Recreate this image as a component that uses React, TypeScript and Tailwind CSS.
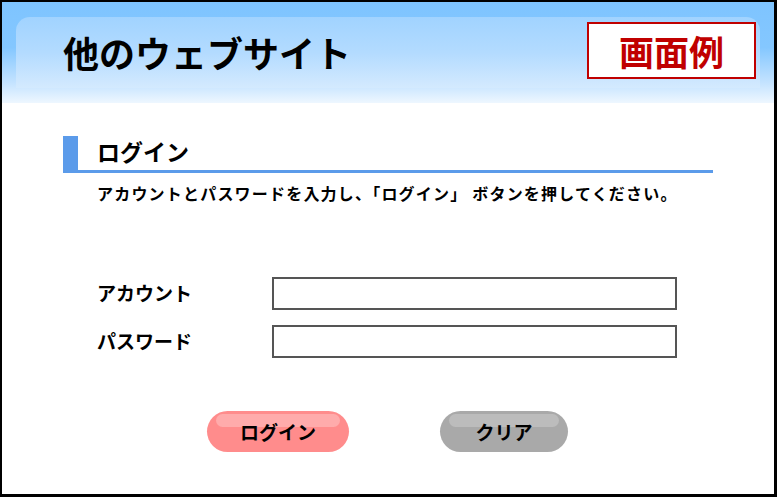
import React from 'react';

const font = { fontFamily: '"Noto Sans CJK JP", "Noto Sans", sans-serif' };

const PillButton: React.FC<{ label: string; base: string; shine: string; width: string }> = ({ label, base, shine, width }) => (
  <button className={`relative h-[41px] ${width} ${base} rounded-full flex items-center justify-center`}>
    <span className={`absolute left-[9px] right-[9px] top-[3px] h-[13px] rounded-full ${shine}`} />
    <span className="relative text-[19px] font-bold text-black leading-none">{label}</span>
  </button>
);

const App: React.FC = () => {
  return (
    <div style={font} className="w-[777px] h-[497px] bg-white border-black border-l-2 border-t-2 border-r-[3px] border-b-[3px] flex flex-col overflow-hidden">
      {/* header */}
      <div className="h-[101px] shrink-0 pt-[15px] pl-[14px] pr-[14px] bg-[linear-gradient(to_bottom,#7ec4ff_0%,#84c7ff_45%,#c4e3ff_80%,#eef7ff_100%)]">
        <div className="h-[71px] rounded-t-[14px] bg-[linear-gradient(to_bottom,#a1d3ff_0%,#b3dbff_50%,#d4eafe_100%)] flex items-start justify-between">
          <h1 className="pl-[47px] mt-[17px] text-[36px] font-bold text-black leading-none">他のウェブサイト</h1>
          <div className="mt-[5px] mr-[4px] w-[169px] h-[57px] bg-white border-2 border-[#c00000] flex items-center justify-center">
            <span className="text-[35px] font-bold text-[#c00000] leading-none">画面例</span>
          </div>
        </div>
      </div>

      {/* body */}
      <div className="pl-[61px] pt-[33px]">
        <div className="w-[650px] h-[37px] flex items-center border-b-[3px] border-[#5b9bea]">
          <div className="w-[15px] self-stretch bg-[#5b9bea]" />
          <h2 className="pl-[19px] pb-[4px] text-[23px] font-bold text-black leading-none">ログイン</h2>
        </div>
        <p className="mt-[8px] pl-[34px] text-[16px] font-bold text-black leading-[24px] tracking-[1.2px]">
          アカウントとパスワードを入力し、「ログイン」 ボタンを押してください。
        </p>

        <div className="mt-[72px] pl-[34px] flex flex-col gap-[15px]">
          <div className="flex items-center">
            <label className="w-[175px] pb-[3px] text-[19px] font-bold text-black leading-none">アカウント</label>
            <input className="w-[405px] h-[33px] border-2 border-[#555555] bg-white outline-none" />
          </div>
          <div className="flex items-center">
            <label className="w-[175px] pb-[3px] text-[19px] font-bold text-black leading-none">パスワード</label>
            <input type="password" className="w-[405px] h-[33px] border-2 border-[#555555] bg-white outline-none" />
          </div>
        </div>

        <div className="mt-[53px] pl-[144px] flex gap-[91px]">
          <PillButton label="ログイン" base="bg-[#ff8c8c]" shine="bg-[#ffabab]" width="w-[142px]" />
          <PillButton label="クリア" base="bg-[#a9a9a9]" shine="bg-[#bcbcbc]" width="w-[128px]" />
        </div>
      </div>
    </div>
  );
};

export default App;
